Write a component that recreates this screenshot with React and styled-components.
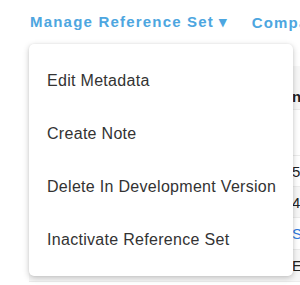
import React from "react";
import styled, { createGlobalStyle } from "styled-components";

const Global = createGlobalStyle`
  html, body { margin: 0; padding: 0; background: #fff; }
  body { font-family: "Liberation Sans", Arial, sans-serif; }
  * { box-sizing: border-box; }
`;

const Page = styled.div`
  position: relative;
  width: 300px;
  height: 285px;
  overflow: hidden;
  background: #fff;
`;

const Nav = styled.nav`
  display: flex;
  align-items: center;
  gap: 23px;
  height: 44px;
  padding: 0 0 0 30px;
  white-space: nowrap;
`;

const NavLink = styled.span`
  color: #4da6e0;
  font-size: 15px;
  font-weight: 700;
  letter-spacing: 1.2px;
`;

const Table = styled.div`
  display: flex;
  flex-direction: column;
  margin-left: 29px;
  margin-top: 22px;
`;

const Row = styled.div`
  display: flex;
  align-items: ${(p) => (p.bottom ? "flex-end" : "center")};
  justify-content: flex-end;
  height: ${(p) => p.h}px;
  padding-bottom: ${(p) => (p.bottom ? 4 : 0)}px;
  background: ${(p) => p.bg};
  border-bottom: 1px solid #ececec;
  font-size: 15px;
  color: ${(p) => (p.link ? "#2f7be0" : "#222")};
  font-weight: ${(p) => (p.bold ? 700 : 400)};
  white-space: nowrap;
`;

const Cell = styled.span`
  width: 8px;
  overflow: hidden;
`;

const Menu = styled.ul`
  position: absolute;
  left: 29px;
  top: 44px;
  width: 264px;
  margin: 0;
  padding: 10px 0;
  list-style: none;
  background: #fff;
  border-radius: 5px;
  box-shadow: 0 2px 6px rgba(0, 0, 0, 0.22), 0 0 2px rgba(0, 0, 0, 0.08);
`;

const Item = styled.li`
  display: flex;
  align-items: center;
  height: 53px;
  padding-left: 18px;
  font-size: 16px;
  letter-spacing: 0.3px;
  color: #333;
  white-space: nowrap;
`;

const rows = [
  { h: 44, bg: "#f7f7f7", t: "n", bold: true, bottom: true },
  { h: 46, bg: "#fff", t: "" },
  { h: 31, bg: "#fff", t: "5" },
  { h: 31, bg: "#f7f7f7", t: "4" },
  { h: 32, bg: "#fff", t: "S", link: true },
  { h: 32, bg: "#f7f7f7", t: "E" },
];

export default function App() {
  return (
    <Page>
      <Global />
      <Nav>
        <NavLink>Manage Reference Set ▾</NavLink>
        <NavLink>Compare</NavLink>
      </Nav>
      <Table>
        {rows.map((r, i) => (
          <Row key={i} h={r.h} bg={r.bg} bold={r.bold} link={r.link} bottom={r.bottom}>
            <Cell>{r.t}</Cell>
          </Row>
        ))}
      </Table>
      <Menu>
        <Item>Edit Metadata</Item>
        <Item>Create Note</Item>
        <Item>Delete In Development Version</Item>
        <Item>Inactivate Reference Set</Item>
      </Menu>
    </Page>
  );
}
